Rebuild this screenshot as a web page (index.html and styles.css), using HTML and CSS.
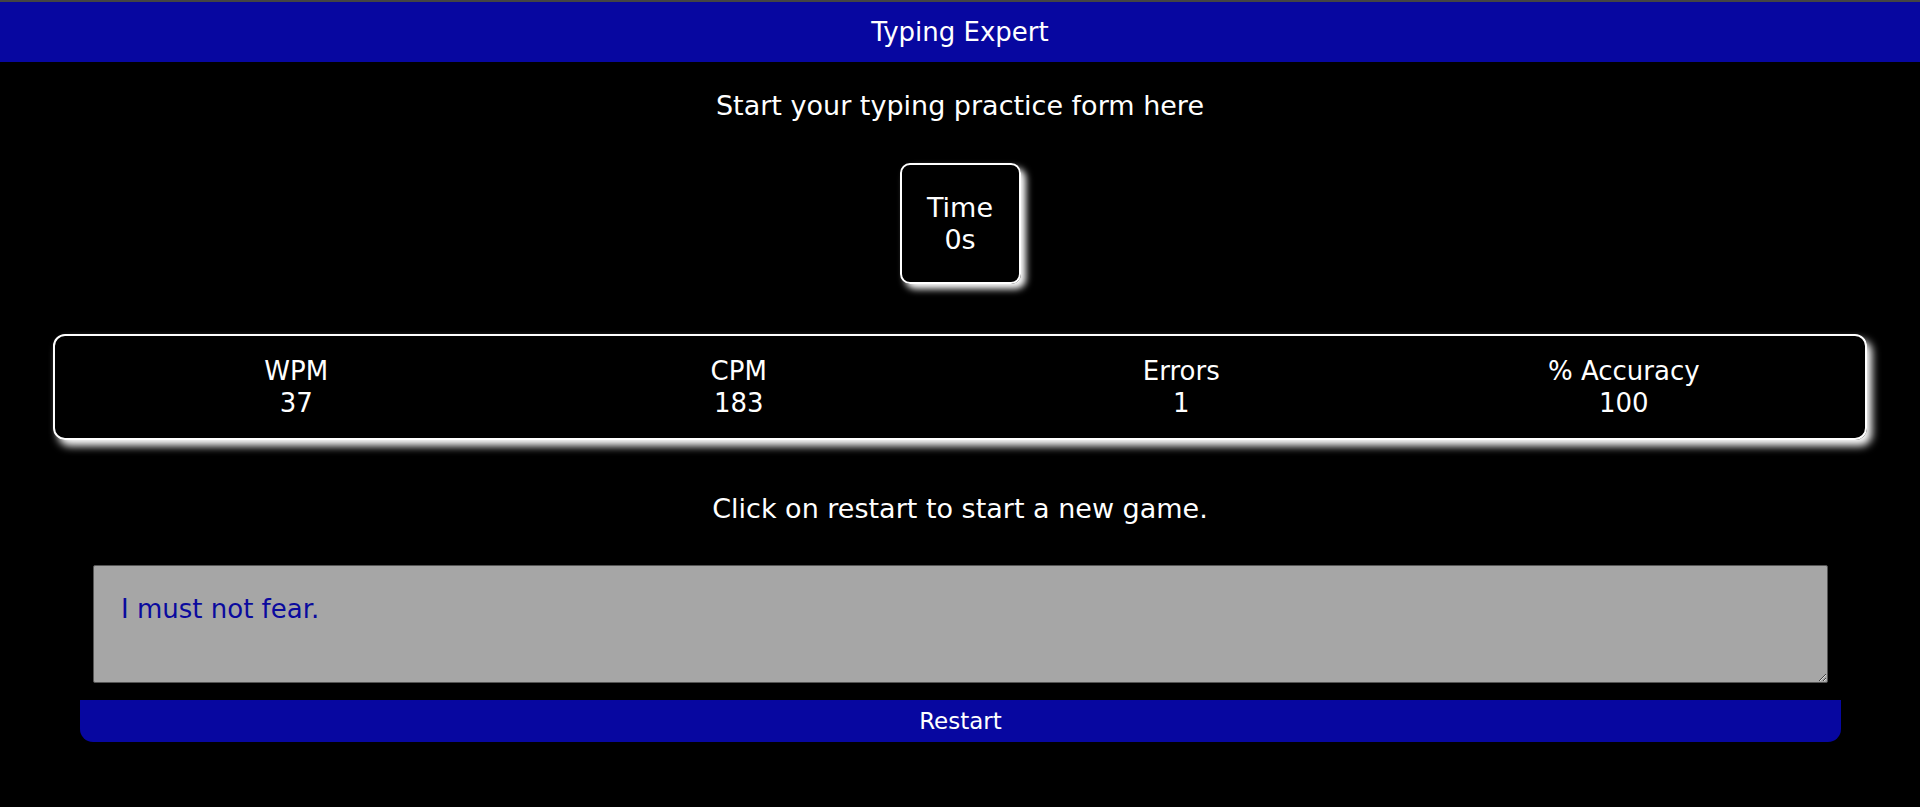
FILE: index.html
```html
<!DOCTYPE html>
<html lang="en">
<head>
<meta charset="utf-8">
<title>Typing Expert</title>
<link rel="stylesheet" href="styles.css">
</head>
<body>
<header class="header">Typing Expert</header>
<main class="main">
  <p class="intro">Start your typing practice form here</p>
  <div class="timer">
    <div class="stat-label">Time</div>
    <div class="stat-value">0s</div>
  </div>
  <div class="stats">
    <div class="stat">
      <div class="stat-label">WPM</div>
      <div class="stat-value">37</div>
    </div>
    <div class="stat">
      <div class="stat-label">CPM</div>
      <div class="stat-value">183</div>
    </div>
    <div class="stat">
      <div class="stat-label">Errors</div>
      <div class="stat-value">1</div>
    </div>
    <div class="stat">
      <div class="stat-label">% Accuracy</div>
      <div class="stat-value">100</div>
    </div>
  </div>
  <p class="message">Click on restart to start a new game.</p>
  <div class="input-wrap">
    <textarea class="input">I must not fear.</textarea>
  </div>
  <div class="button-wrap">
    <button class="restart">Restart</button>
  </div>
</main>
</body>
</html>
```

FILE: styles.css
```css
html, body {
  margin: 0;
  padding: 0;
  background: #000;
  color: #fff;
  font-family: "DejaVu Sans", sans-serif;
}

.header {
  height: 60px;
  border-top: 2px solid #444;
  background: #0707a0;
  color: #fff;
  font-size: 26px;
  display: flex;
  align-items: center;
  justify-content: center;
}

.main {
  display: flex;
  flex-direction: column;
  align-items: stretch;
}

.intro,
.message {
  margin: 0;
  text-align: center;
  font-size: 27px;
  line-height: 32px;
}

.intro {
  margin-top: 28px;
}

.timer {
  align-self: center;
  box-sizing: border-box;
  width: 121px;
  height: 121px;
  margin-top: 41px;
  border: 2px solid #fff;
  border-radius: 10px;
  box-shadow: 5px 5px 7px #fff;
  display: flex;
  flex-direction: column;
  justify-content: center;
  align-items: center;
  font-size: 27px;
  line-height: 32px;
}

.stats {
  margin: 50px 53px 0;
  padding: 19px 20px;
  border: 2px solid #fff;
  border-radius: 12px;
  box-shadow: 5px 6px 8px #fff;
  display: grid;
  grid-template-columns: repeat(4, 1fr);
  font-size: 26px;
  line-height: 32px;
  text-align: center;
}

.message {
  margin-top: 53px;
}

.input-wrap {
  margin: 40px 92px 0 93px;
  display: flex;
}

.input {
  flex: 1;
  box-sizing: border-box;
  height: 118px;
  margin: 0;
  padding: 27px 27px;
  border: 1px solid #555;
  border-radius: 2px;
  background: #a6a6a6;
  color: #0a0a9e;
  font-family: "DejaVu Sans", sans-serif;
  font-size: 26px;
  line-height: 32px;
  outline: none;
}

.button-wrap {
  margin: 17px 79px 0 80px;
  display: flex;
}

.restart {
  flex: 1;
  height: 42px;
  margin: 0;
  padding: 0;
  border: none;
  border-radius: 0 0 13px 13px;
  background: #0707a0;
  color: #fff;
  font-family: "DejaVu Sans", sans-serif;
  font-size: 23px;
}
```
